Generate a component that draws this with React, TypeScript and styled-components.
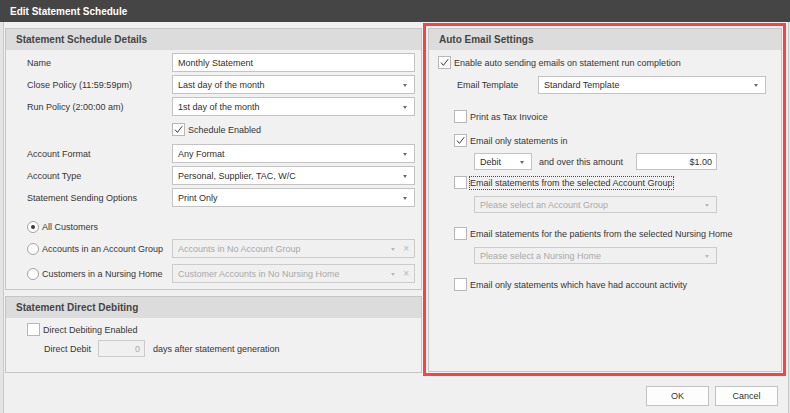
import React from "react";
import styled, { createGlobalStyle } from "styled-components";

const GlobalStyle = createGlobalStyle`
  * { box-sizing: border-box; }
  html, body { margin: 0; padding: 0; background: #e4e4e4; }
  body {
    font-family: "Liberation Sans", Arial, sans-serif;
    font-size: 9px;
    color: #353535;
  }
`;

const Window = styled.div`
  width: 790px;
  height: 413px;
  display: flex;
  flex-direction: column;
  overflow: hidden;
`;

const TitleBar = styled.div`
  height: 22px;
  flex: none;
  display: flex;
  align-items: center;
  padding: 1px 0 0 10px;
  background: #454545;
  color: #ffffff;
  font-size: 10px;
  font-weight: bold;
`;

const Body = styled.div`
  flex: 1;
  margin: 0 1px 0 3px;
  padding: 1px 2px 0 1px;
  display: flex;
  flex-direction: column;
  background: #f0f0f0;
  border-left: 1px solid #c9c9c9;
  border-right: 1px solid #c9c9c9;
`;

const Columns = styled.div`
  display: grid;
  grid-template-columns: 417px 363px;
  column-gap: 1px;
  align-items: start;
`;

const LeftColumn = styled.div`
  padding-top: 5px;
  display: flex;
  flex-direction: column;
  gap: 6px;
`;

// red annotation frame around the email settings
const Highlight = styled.div`
  height: 353px;
  display: flex;
  padding: 2px 1px 1px 2px;
  border: 3px solid #f24545;
`;

const GroupBox = styled.section<{ $height?: number }>`
  ${({ $height }) => ($height ? `height: ${$height}px;` : "flex: 1;")}
  display: flex;
  flex-direction: column;
  background: #f1f1f1;
  border: 1px solid #c6c6c6;
`;

const GroupHeader = styled.div`
  height: 21px;
  flex: none;
  display: flex;
  align-items: center;
  padding-left: 10px;
  background: #dcdcdc;
  color: #454545;
  font-size: 10px;
  font-weight: bold;
`;

const GroupContent = styled.div<{ $pad: string }>`
  display: flex;
  flex-direction: column;
  padding: ${({ $pad }) => $pad};
`;

const FormRow = styled.div<{ $mt?: number }>`
  display: grid;
  grid-template-columns: 145px 243px;
  align-items: center;
  margin-top: ${({ $mt }) => $mt ?? 3}px;
`;

const Line = styled.div<{ $mt?: number; $indent?: number; $gap?: number }>`
  display: flex;
  align-items: center;
  min-height: 17px;
  margin-top: ${({ $mt }) => $mt ?? 0}px;
  padding-left: ${({ $indent }) => $indent ?? 0}px;
  gap: ${({ $gap }) => $gap ?? 0}px;
`;

const Label = styled.span`
  color: #353535;
  white-space: nowrap;
`;

const Field = styled.div<{ $height?: number; $width?: number; $disabled?: boolean; $right?: boolean }>`
  height: ${({ $height }) => $height ?? 19}px;
  width: ${({ $width }) => ($width ? `${$width}px` : "100%")};
  display: flex;
  align-items: center;
  justify-content: ${({ $right }) => ($right ? "flex-end" : "flex-start")};
  padding: 0 4px 0 5px;
  background: ${({ $disabled }) => ($disabled ? "#f0f0f0" : "#ffffff")};
  border: 1px solid ${({ $disabled }) => ($disabled ? "#cbcbcb" : "#c3c3c3")};
  color: ${({ $disabled }) => ($disabled ? "#a9a9a9" : "#2f2f2f")};
  white-space: nowrap;
`;

const FieldText = styled.span`
  flex: 1;
`;

const Caret = styled.span<{ $disabled?: boolean }>`
  width: 0;
  height: 0;
  margin: 1px 3px 0 6px;
  border-left: 2.5px solid transparent;
  border-right: 2.5px solid transparent;
  border-top: 3px solid ${({ $disabled }) => ($disabled ? "#b9b9b9" : "#6a6a6a")};
`;

const Clear = styled.span`
  color: #b8b8b8;
  font-size: 10px;
  margin: 0 1px 0 5px;
`;

const CheckWrap = styled.label`
  display: inline-flex;
  align-items: center;
  gap: 3px;
  color: #353535;
  white-space: nowrap;
`;

const Box = styled.span`
  width: 13px;
  height: 13px;
  flex: none;
  display: inline-flex;
  align-items: center;
  justify-content: center;
  background: #ffffff;
  border: 1px solid #b7b7b7;
`;

const Focused = styled.span`
  margin-left: -1px;
  padding: 1px 0 1px 0;
  border: 1px dotted #4a4a4a;
`;

const Circle = styled.span`
  width: 12px;
  height: 12px;
  flex: none;
  display: inline-flex;
  align-items: center;
  justify-content: center;
  border-radius: 50%;
  background: #ffffff;
  border: 1px solid #a4a4a4;
`;

const Dot = styled.span`
  width: 4px;
  height: 4px;
  border-radius: 50%;
  background: #3a3a3a;
`;

const AmountRow = styled.div`
  display: grid;
  grid-template-columns: 58px 90px 81px;
  column-gap: 7px;
  align-items: center;
  margin-top: 3px;
  padding-left: 36px;
`;

const TemplateRow = styled.div`
  display: grid;
  grid-template-columns: 81px 228px;
  align-items: center;
  margin-top: 4px;
  padding-left: 19px;
`;

const Footer = styled.div`
  display: flex;
  justify-content: flex-end;
  gap: 6px;
  margin-top: 10px;
  padding-right: 8px;
`;

const Button = styled.button`
  width: 63px;
  height: 20px;
  padding: 0;
  font: inherit;
  color: #333333;
  background: #fdfdfd;
  border: 1px solid #c2c2c2;
`;

function Tick() {
  return (
    <svg width="11" height="11" viewBox="0 0 11 11">
      <path d="M2 5.6 L4.4 8.4 L9.2 2.2" fill="none" stroke="#3a3a3a" strokeWidth="1" />
    </svg>
  );
}

function Check({ checked, focused, children }: { checked?: boolean; focused?: boolean; children: React.ReactNode }) {
  return (
    <CheckWrap>
      <Box>{checked && <Tick />}</Box>
      {focused ? <Focused>{children}</Focused> : children}
    </CheckWrap>
  );
}

function Radio({ checked, children }: { checked?: boolean; children: React.ReactNode }) {
  return (
    <CheckWrap>
      <Circle>{checked && <Dot />}</Circle>
      {children}
    </CheckWrap>
  );
}

function Combo({
  value,
  disabled,
  clearable,
  height,
  width,
}: {
  value: string;
  disabled?: boolean;
  clearable?: boolean;
  height?: number;
  width?: number;
}) {
  return (
    <Field $disabled={disabled} $height={height} $width={width}>
      <FieldText>{value}</FieldText>
      <Caret $disabled={disabled} />
      {clearable && <Clear>×</Clear>}
    </Field>
  );
}

export default function App() {
  return (
    <Window>
      <GlobalStyle />
      <TitleBar>Edit Statement Schedule</TitleBar>
      <Body>
        <Columns>
          <LeftColumn>
            <GroupBox $height={262}>
              <GroupHeader>Statement Schedule Details</GroupHeader>
              <GroupContent $pad="0 6px 0 21px">
                <FormRow $mt={3}>
                  <Label>Name</Label>
                  <Field>Monthly Statement</Field>
                </FormRow>
                <FormRow>
                  <Label>Close Policy (11:59:59pm)</Label>
                  <Combo value="Last day of the month" />
                </FormRow>
                <FormRow>
                  <Label>Run Policy (2:00:00 am)</Label>
                  <Combo value="1st day of the month" />
                </FormRow>
                <FormRow $mt={5}>
                  <span />
                  <Line>
                    <Check checked>Schedule Enabled</Check>
                  </Line>
                </FormRow>
                <FormRow $mt={6}>
                  <Label>Account Format</Label>
                  <Combo value="Any Format" />
                </FormRow>
                <FormRow>
                  <Label>Account Type</Label>
                  <Combo value="Personal, Supplier, TAC, W/C" />
                </FormRow>
                <FormRow>
                  <Label>Statement Sending Options</Label>
                  <Combo value="Print Only" />
                </FormRow>
                <FormRow $mt={10}>
                  <Line>
                    <Radio checked>All Customers</Radio>
                  </Line>
                  <span style={{ height: 19 }} />
                </FormRow>
                <FormRow $mt={3}>
                  <Radio>Accounts in an Account Group</Radio>
                  <Combo value="Accounts in No Account Group" disabled clearable />
                </FormRow>
                <FormRow $mt={6}>
                  <Radio>Customers in a Nursing Home</Radio>
                  <Combo value="Customer Accounts in No Nursing Home" disabled clearable />
                </FormRow>
              </GroupContent>
            </GroupBox>

            <GroupBox $height={77}>
              <GroupHeader>Statement Direct Debiting</GroupHeader>
              <GroupContent $pad="2px 0 0 21px">
                <Line style={{ height: 19 }}>
                  <Check>Direct Debiting Enabled</Check>
                </Line>
                <Line $mt={1} $indent={17} $gap={7}>
                  <Label>Direct Debit</Label>
                  <Field $width={47} $height={17} $disabled $right>
                    0
                  </Field>
                  <Label style={{ marginLeft: 1 }}>days after statement generation</Label>
                </Line>
              </GroupContent>
            </GroupBox>
          </LeftColumn>

          <Highlight>
            <GroupBox>
              <GroupHeader>Auto Email Settings</GroupHeader>
              <GroupContent $pad="3px 0 0 9px">
                <Line style={{ height: 19 }}>
                  <Check checked>Enable auto sending emails on statement run completion</Check>
                </Line>
                <TemplateRow>
                  <Label>Email Template</Label>
                  <Combo value="Standard Template" height={18} />
                </TemplateRow>
                <Line $mt={13} $indent={16} style={{ height: 19 }}>
                  <Check>Print as Tax Invoice</Check>
                </Line>
                <Line $mt={5} $indent={16} style={{ height: 19 }}>
                  <Check checked>Email only statements in</Check>
                </Line>
                <AmountRow>
                  <Combo value="Debit" height={17} />
                  <Label>and over this amount</Label>
                  <Field $height={17} $right>
                    $1.00
                  </Field>
                </AmountRow>
                <Line $mt={3} $indent={16} style={{ height: 19 }}>
                  <Check focused>Email statements from the selected Account Group</Check>
                </Line>
                <Line $mt={4} $indent={36}>
                  <Combo value="Please select an Account Group" disabled height={17} width={243} />
                </Line>
                <Line $mt={11} $indent={16} style={{ height: 19 }}>
                  <Check>Email statements for the patients from the selected Nursing Home</Check>
                </Line>
                <Line $mt={4} $indent={36}>
                  <Combo value="Please select a Nursing Home" disabled height={17} width={243} />
                </Line>
                <Line $mt={11} $indent={16} style={{ height: 19 }}>
                  <Check>Email only statements which have had account activity</Check>
                </Line>
              </GroupContent>
            </GroupBox>
          </Highlight>
        </Columns>

        <Footer>
          <Button>OK</Button>
          <Button>Cancel</Button>
        </Footer>
      </Body>
    </Window>
  );
}
